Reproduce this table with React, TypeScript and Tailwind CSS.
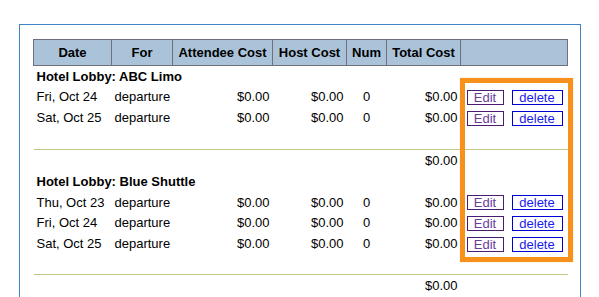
const groups = [
  {
    name: "Hotel Lobby: ABC Limo",
    rows: [
      { date: "Fri, Oct 24", h: "h-[21px]" },
      { date: "Sat, Oct 25", h: "h-[21px]" },
    ],
    spacer: "h-[20px]",
    titleH: "h-[21px]",
  },
  {
    name: "Hotel Lobby: Blue Shuttle",
    rows: [
      { date: "Thu, Oct 23", h: "h-[20px]" },
      { date: "Fri, Oct 24", h: "h-[21px]" },
      { date: "Sat, Oct 25", h: "h-[21px]" },
    ],
    spacer: "h-[19px]",
    titleH: "h-[21px]",
  },
];

const headers = ["Date", "For", "Attendee Cost", "Host Cost", "Num", "Total Cost", ""];

export default function App() {
  return (
    <div className="h-[297px] w-[599px] overflow-hidden bg-white pt-[24px] pl-[19px] font-['Liberation_Sans',Arial,sans-serif] text-[13px] text-black">
      <div className="relative h-[300px] w-[562px] border border-[#3d85c6] pt-[14px] pl-[13px]">
        <table className="w-[534px] table-fixed border-collapse">
          <colgroup>
            <col className="w-[78px]" />
            <col className="w-[61px]" />
            <col className="w-[100px]" />
            <col className="w-[74px]" />
            <col className="w-[40px]" />
            <col className="w-[74px]" />
            <col className="w-[107px]" />
          </colgroup>
          <thead>
            <tr className="h-[26px] bg-[#abc3d9]">
              {headers.map((h, i) => (
                <th
                  key={i}
                  className="border border-[#6f6f7d] p-0 text-center align-middle font-bold leading-[15px]"
                >
                  {h}
                </th>
              ))}
            </tr>
          </thead>
          <tbody>
            {groups.map((g) => (
              <>
                <tr key={g.name + "t"} className={g.titleH}>
                  <td colSpan={7} className="p-0 pl-[3px] align-middle font-bold">
                    {g.name}
                  </td>
                </tr>
                {g.rows.map((r) => (
                  <tr key={g.name + r.date} className={r.h}>
                    <td className="p-0 pl-[3px] align-middle whitespace-nowrap">{r.date}</td>
                    <td className="p-0 pl-[3px] align-middle">departure</td>
                    <td className="p-0 pr-[3px] text-right align-middle">$0.00</td>
                    <td className="p-0 pr-[3px] text-right align-middle">$0.00</td>
                    <td className="p-0 text-center align-middle">0</td>
                    <td className="p-0 pr-[3px] text-right align-middle">$0.00</td>
                    <td className="p-0 pl-[6px] align-middle">
                      <div className="flex items-center gap-[8px]">
                        <span className="flex h-[15px] w-[37px] items-center justify-center border border-[#4b1c72] leading-[13px] text-[#6a3c9c]">
                          Edit
                        </span>
                        <span className="flex h-[15px] w-[51px] items-center justify-center border border-[#0000d6] leading-[13px] text-[#1a1aee]">
                          delete
                        </span>
                      </div>
                    </td>
                  </tr>
                ))}
                <tr key={g.name + "s"} className={g.spacer}>
                  <td colSpan={7} className="p-0" />
                </tr>
                <tr key={g.name + "l"} className="h-px">
                  <td colSpan={7} className="h-px bg-[#c4c68c] p-0" />
                </tr>
                <tr key={g.name + "tot"} className="h-[22px]">
                  <td colSpan={5} className="p-0" />
                  <td className="p-0 pr-[3px] text-right align-middle">$0.00</td>
                  <td className="p-0" />
                </tr>
              </>
            ))}
          </tbody>
        </table>
        <div className="pointer-events-none absolute top-[53px] left-[440px] h-[184px] w-[113px] border-[5px] border-[#f8911c] shadow-[0_0_1px_#fbc88a]" />
      </div>
    </div>
  );
}
